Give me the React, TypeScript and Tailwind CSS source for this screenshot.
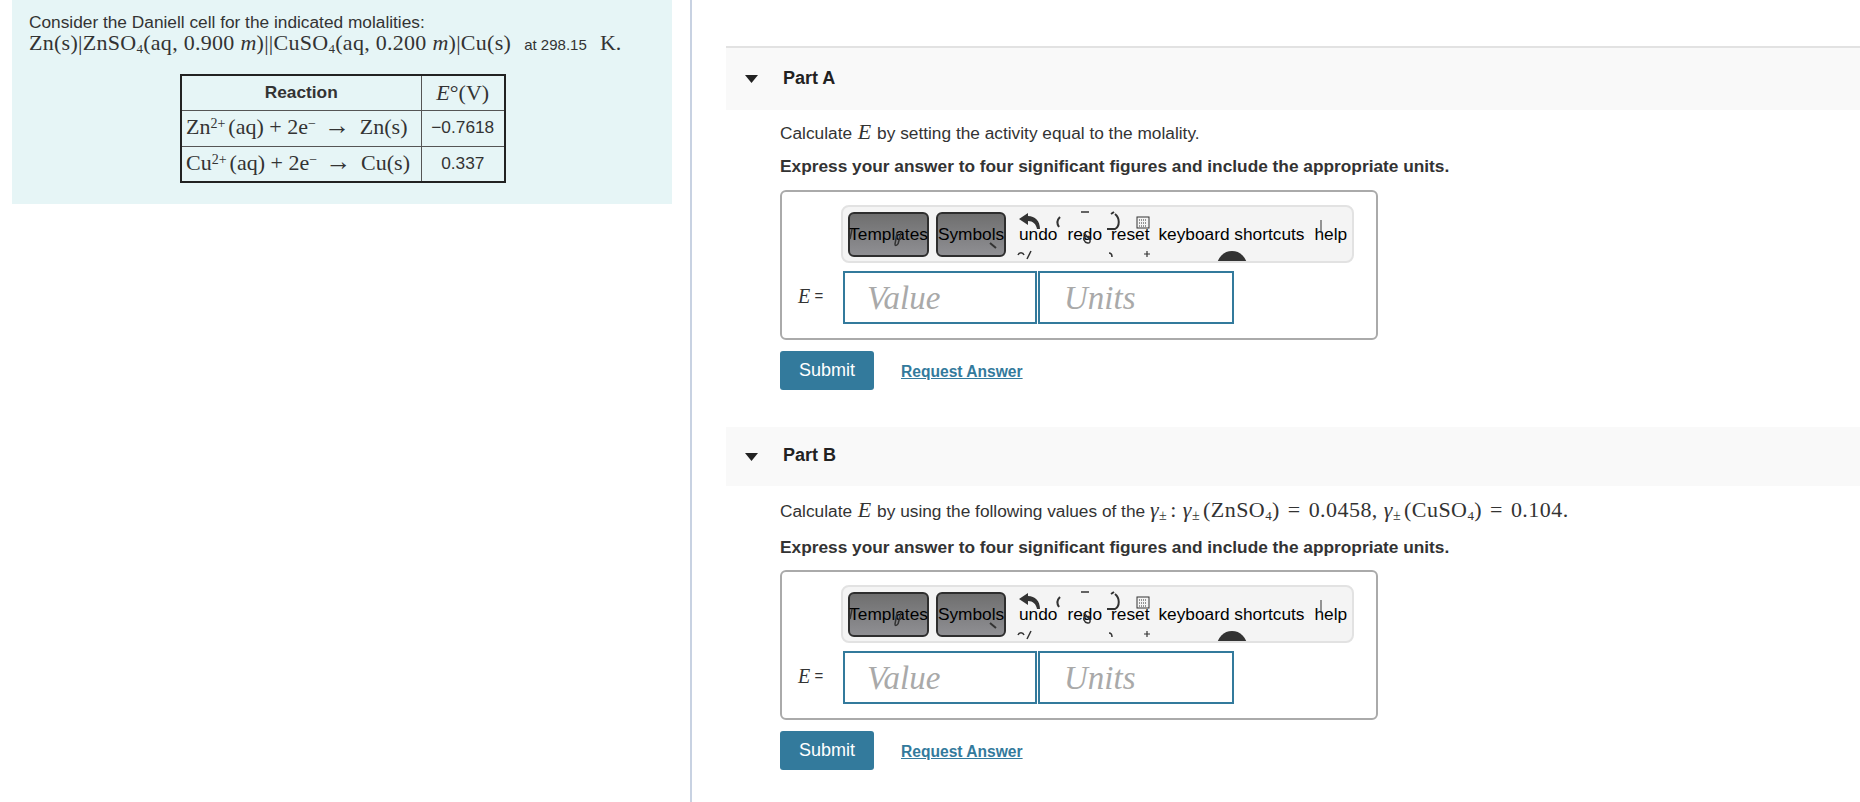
const serif = 'font-["Liberation_Serif",serif]';

function Sub({ children }: { children: string }) {
  return <sub className="static align-[-3px] text-[13px] leading-none">{children}</sub>;
}

function Sup({ children }: { children: string }) {
  return <sup className="static mr-[3px] align-[6px] text-[14px] leading-none">{children}</sup>;
}

function Gamma({ className }: { className?: string }) {
  return (
    <>
      <i className={className}>γ</i>
      <sub className="static mr-[3px] align-[-3px] text-[14px] leading-none">±</sub>
    </>
  );
}

function Eq() {
  return <span className="mx-[2px]">=</span>;
}

function Toolbar() {
  return (
    <div className="relative ml-[59px] mt-[13px] flex h-[58px] w-[513px] items-start overflow-hidden rounded-lg border-2 border-[#e2e2e2] bg-[#f4f4f4] pl-[5px] pt-[5px] text-[17.300px] text-black">
      <div className="flex h-[45px] w-[81px] items-center justify-center rounded-md border-2 border-[#2e2e2e] bg-gradient-to-b from-[#6f6f6f] to-[#8f8f93]">
        Templates
      </div>
      <div className="ml-[7px] flex h-[45px] w-[70px] items-center justify-center rounded-md border-2 border-[#2e2e2e] bg-gradient-to-b from-[#6f6f6f] to-[#8f8f93]">
        Symbols
      </div>
      <span className="ml-[13px] mt-[10px]">undo</span>
      <span className="ml-[10px] mt-[10px]">redo</span>
      <span className="ml-[9px] mt-[10px]">reset</span>
      <span className="ml-[9px] mt-[10px] whitespace-nowrap">keyboard shortcuts</span>
      <span className="ml-[10px] mt-[10px]">help</span>
      {/* bits of the sprite icons that show behind the labels */}
      <svg className="absolute left-[-2px] top-[-2px] h-[58px] w-[513px]" viewBox="0 0 513 58" fill="none" stroke="#333" strokeWidth="1.500">
        <path d="M187 8L178 14L187 20V16C192 16 195 19 196 24L199 24C199 16 194 11 187 11Z" fill="#333" stroke="none" />
        <path d="M219 12c-3 3-3 7-1 10" strokeWidth="2" />
        <path d="M240 7h8" />
        <path d="M249 32c-4-2-7 0-6 3s7 5 6 0l-6-7" />
        <path d="M270 9l3-2M274 9c5 4 5 12 0 15h-8" strokeWidth="2" />
        <path d="M268 48c3 0 3 2 3 4" />
        <path d="M306 46v6M303 49h6" strokeWidth="1.200" />
        <path d="M177 50c1-3 5-3 6 0M190 46l-4 8" />
        <path d="M149 38l6 5" strokeWidth="2" />
        <path d="M56 28l-2 11c0 2 1 2 3 0" />
        <path d="M60 28l-3 11" />
        <path d="M11 24l-2 10" />
        <rect x="296" y="12" width="12" height="11" fill="#f4f4f4" strokeWidth="1" />
        <path d="M298 15h8M298 18h8M298 21h8" strokeDasharray="1 1" strokeWidth="1.200" />
        <path d="M480 15v13" strokeWidth="1" />
      </svg>
      <div className="absolute bottom-[-12px] left-[374px] h-[22px] w-[30px] rounded-t-full bg-[#333]" />
    </div>
  );
}

function AnswerBox({ className }: { className: string }) {
  return (
    <div className={`h-[150px] w-[598px] rounded-md border-2 border-[#aaaaaa] bg-white ${className}`}>
      <Toolbar />
      <div className="mt-[8px] flex items-center pl-[16px]">
        <span className="mb-[3px] flex w-[45px] items-center text-[15px] text-[#333]">
          <i className={`${serif} text-[20px]`}>E</i>&nbsp;=
        </span>
        <div className={`flex h-[53px] w-[194px] items-center border-2 border-[#337a9c] pl-[22px] pt-[2px] text-[33px] italic text-[#a9a9a9] ${serif}`}>
          Value
        </div>
        <div className={`ml-[1px] flex h-[53px] w-[196px] items-center border-2 border-[#337a9c] pl-[24px] pt-[2px] text-[33px] italic text-[#a9a9a9] ${serif}`}>
          Units
        </div>
      </div>
    </div>
  );
}

function Actions() {
  return (
    <div className="mt-[11px] flex items-center">
      <div className="flex h-[39px] w-[94px] items-center justify-center rounded-[3px] bg-[#337a9c] text-[18px] text-white">Submit</div>
      <span className="ml-[27px] mt-[2px] text-[15.600px] font-bold text-[#337a9c] underline">Request Answer</span>
    </div>
  );
}

function PartHeader({ title, className }: { title: string; className: string }) {
  return (
    <div className={`flex items-center bg-[#f9f9f9] pl-[19px] ${className}`}>
      <svg className="h-[8px] w-[13px]" viewBox="0 0 13 8">
        <path d="M0 0h13L6.500 8z" fill="#222" />
      </svg>
      <span className="mb-[2px] ml-[25px] text-[18px] font-bold text-[#222]">{title}</span>
    </div>
  );
}

export default function App() {
  return (
    <div className='flex h-[802px] w-[1860px] overflow-hidden bg-white font-["Liberation_Sans",sans-serif] text-[17.300px] text-[#333]'>
      <div className="h-full w-[692px] shrink-0 border-r-2 border-[#c8d2e2] pl-[12px]">
        <div className="h-[204px] w-[660px] bg-[#e6f5f6] pl-[17px] pt-[12px]">
          <p className="leading-[20px]">Consider the Daniell cell for the indicated molalities:</p>
          <p className="text-[15px] leading-[22px]">
            <span className={`${serif} text-[22px] tracking-[0.280px]`}>
              Zn(s)|ZnSO<Sub>4</Sub>(aq, 0.900 <i>m</i>)||CuSO<Sub>4</Sub>(aq, 0.200 <i>m</i>)|Cu(s)
            </span>
            <span className="ml-[13px]">at 298.15</span> <span className={`${serif} ml-[9px] text-[22px]`}>K.</span>
          </p>
          <table className="ml-[151px] mt-[18px] h-[107px] w-[326px] border-collapse border-2 border-[#222]">
            <tbody>
              <tr className="h-[35px]">
                <th className="w-[240px] border border-[#555] font-bold">Reaction</th>
                <td className={`border border-[#555] text-center text-[22px] leading-[26px] ${serif}`}>
                  <i>E</i>°(V)
                </td>
              </tr>
              <tr className="h-[36px]">
                <td className={`whitespace-nowrap border border-[#555] pb-[3px] pl-[4px] text-[22px] leading-[26px] ${serif}`}>
                  Zn<Sup>2+</Sup>(aq) + 2e<Sup>−</Sup> <span className="mr-[4px] text-[26px] leading-none">→</span> Zn(s)
                </td>
                <td className="border border-[#555] pb-[2px] text-center leading-[26px]">−0.7618</td>
              </tr>
              <tr className="h-[36px]">
                <td className={`whitespace-nowrap border border-[#555] pb-[3px] pl-[4px] text-[22px] leading-[26px] ${serif}`}>
                  Cu<Sup>2+</Sup>(aq) + 2e<Sup>−</Sup> <span className="mr-[4px] text-[26px] leading-none">→</span> Cu(s)
                </td>
                <td className="border border-[#555] pb-[2px] text-center leading-[26px]">0.337</td>
              </tr>
            </tbody>
          </table>
        </div>
      </div>

      <div className="flex-1 pl-[34px] pt-[46px]">
        <PartHeader title="Part A" className="h-[64px] border-t-2 border-[#e2e2e2]" />
        <div className="pl-[54px]">
          <p className="mt-[12px] leading-[20px]">
            Calculate <i className={`${serif} mx-[1px] text-[22px]`}>E</i> by setting the activity equal to the molality.
          </p>
          <p className="mt-[13px] font-bold leading-[20px]">
            Express your answer to four significant figures and include the appropriate units.
          </p>
          <AnswerBox className="mt-[14px]" />
          <Actions />
        </div>

        <div className="mt-[37px]">
          <PartHeader title="Part B" className="h-[59px]" />
        </div>
        <div className="pl-[54px]">
          <p className="mt-[12px] leading-[24px]">
            Calculate <i className={`${serif} mx-[1px] text-[22px]`}>E</i> by using the following values of the{' '}
            <span className={`${serif} text-[22px] tracking-[0.450px]`}>
              <Gamma />: <Gamma />(ZnSO<Sub>4</Sub>) <Eq /> 0.0458, <Gamma />(CuSO<Sub>4</Sub>) <Eq /> 0.104.
            </span>
          </p>
          <p className="mt-[14px] font-bold leading-[20px]">
            Express your answer to four significant figures and include the appropriate units.
          </p>
          <AnswerBox className="mt-[13px]" />
          <Actions />
        </div>
      </div>
    </div>
  );
}
